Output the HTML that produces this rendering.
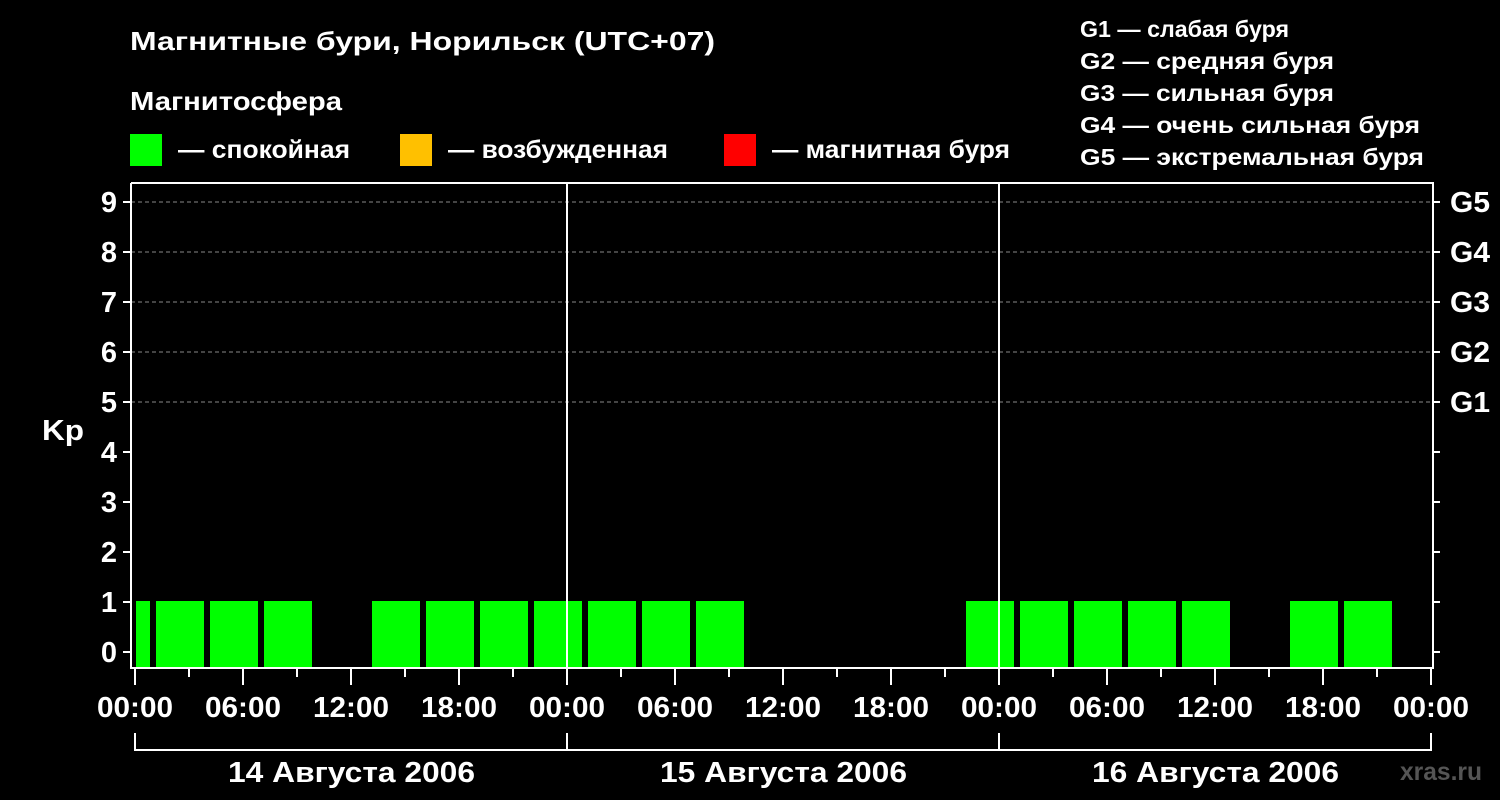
<!DOCTYPE html><html><head><meta charset="utf-8"><style>body{margin:0;background:#000}svg{display:block}text{font-family:"Liberation Sans",sans-serif;font-weight:bold;fill:#fff}</style></head><body>
<svg width="1500" height="800" viewBox="0 0 1500 800">
<rect width="1500" height="800" fill="#000"/>
<text x="130" y="50" font-size="26" textLength="585" lengthAdjust="spacingAndGlyphs">Магнитные бури, Норильск (UTC+07)</text>
<text x="130" y="110" font-size="26" textLength="212" lengthAdjust="spacingAndGlyphs">Магнитосфера</text>
<rect x="130" y="134" width="32" height="32" fill="#00ff00"/>
<text x="178" y="158" font-size="25" textLength="172" lengthAdjust="spacingAndGlyphs">— спокойная</text>
<rect x="400" y="134" width="32" height="32" fill="#ffc000"/>
<text x="448" y="158" font-size="25" textLength="220" lengthAdjust="spacingAndGlyphs">— возбужденная</text>
<rect x="724" y="134" width="32" height="32" fill="#ff0000"/>
<text x="772" y="158" font-size="25" textLength="238" lengthAdjust="spacingAndGlyphs">— магнитная буря</text>
<g font-size="23">
<text x="1080" y="37" textLength="209" lengthAdjust="spacingAndGlyphs">G1 — слабая буря</text>
<text x="1080" y="69" textLength="254" lengthAdjust="spacingAndGlyphs">G2 — средняя буря</text>
<text x="1080" y="101" textLength="254" lengthAdjust="spacingAndGlyphs">G3 — сильная буря</text>
<text x="1080" y="133" textLength="340" lengthAdjust="spacingAndGlyphs">G4 — очень сильная буря</text>
<text x="1080" y="165" textLength="344" lengthAdjust="spacingAndGlyphs">G5 — экстремальная буря</text>
</g>
<g stroke="#888" stroke-dasharray="4,3" stroke-width="1">
<line x1="131" y1="202" x2="1433" y2="202"/><line x1="131" y1="252" x2="1433" y2="252"/><line x1="131" y1="302" x2="1433" y2="302"/><line x1="131" y1="352" x2="1433" y2="352"/><line x1="131" y1="402" x2="1433" y2="402"/>
</g>
<g fill="#00ff00">
<rect x="136" y="601" width="14" height="67"/>
<rect x="156" y="601" width="48" height="67"/><rect x="210" y="601" width="48" height="67"/><rect x="264" y="601" width="48" height="67"/>
<rect x="372" y="601" width="48" height="67"/><rect x="426" y="601" width="48" height="67"/><rect x="480" y="601" width="48" height="67"/><rect x="534" y="601" width="48" height="67"/><rect x="588" y="601" width="48" height="67"/><rect x="642" y="601" width="48" height="67"/><rect x="696" y="601" width="48" height="67"/>
<rect x="966" y="601" width="48" height="67"/><rect x="1020" y="601" width="48" height="67"/><rect x="1074" y="601" width="48" height="67"/><rect x="1128" y="601" width="48" height="67"/><rect x="1182" y="601" width="48" height="67"/>
<rect x="1290" y="601" width="48" height="67"/><rect x="1344" y="601" width="48" height="67"/>
</g>
<g stroke="#fff" stroke-width="2" fill="none">
<polyline points="131,183 1433,183 1433,668 131,668 131,183"/>
<line x1="567" y1="183" x2="567" y2="668"/><line x1="999" y1="183" x2="999" y2="668"/>
<path d="M123 202h8M123 252h8M123 302h8M123 352h8M123 402h8M123 452h8M123 502h8M123 552h8M123 602h8M123 652h8"/>
<path d="M1433 202h7M1433 252h7M1433 302h7M1433 352h7M1433 402h7M1433 452h7M1433 502h7M1433 552h7M1433 602h7M1433 652h7"/>
<path d="M135 668v17M243 668v17M351 668v17M459 668v17M567 668v17M675 668v17M783 668v17M891 668v17M999 668v17M1107 668v17M1215 668v17M1323 668v17M1431 668v17"/>
<path d="M189 668v9M297 668v9M405 668v9M513 668v9M621 668v9M729 668v9M837 668v9M945 668v9M1053 668v9M1161 668v9M1269 668v9M1377 668v9"/>
<path d="M135 733v17H1431V733M567 733v17M999 733v17"/>
</g>
<g font-size="29" text-anchor="end">
<text x="117" y="212">9</text><text x="117" y="262">8</text><text x="117" y="312">7</text><text x="117" y="362">6</text><text x="117" y="412">5</text><text x="117" y="462">4</text><text x="117" y="512">3</text><text x="117" y="562">2</text><text x="117" y="612">1</text><text x="117" y="662">0</text>
</g>
<g font-size="29"><text x="1450" y="212" textLength="40" lengthAdjust="spacingAndGlyphs">G5</text><text x="1450" y="262" textLength="40" lengthAdjust="spacingAndGlyphs">G4</text><text x="1450" y="312" textLength="40" lengthAdjust="spacingAndGlyphs">G3</text><text x="1450" y="362" textLength="40" lengthAdjust="spacingAndGlyphs">G2</text><text x="1450" y="412" textLength="40" lengthAdjust="spacingAndGlyphs">G1</text></g>
<text x="42" y="440" font-size="29" textLength="42" lengthAdjust="spacingAndGlyphs">Kp</text>
<g font-size="29">
<text x="97" y="717" textLength="76" lengthAdjust="spacingAndGlyphs">00:00</text><text x="205" y="717" textLength="76" lengthAdjust="spacingAndGlyphs">06:00</text><text x="313" y="717" textLength="76" lengthAdjust="spacingAndGlyphs">12:00</text><text x="421" y="717" textLength="76" lengthAdjust="spacingAndGlyphs">18:00</text><text x="529" y="717" textLength="76" lengthAdjust="spacingAndGlyphs">00:00</text><text x="637" y="717" textLength="76" lengthAdjust="spacingAndGlyphs">06:00</text><text x="745" y="717" textLength="76" lengthAdjust="spacingAndGlyphs">12:00</text><text x="853" y="717" textLength="76" lengthAdjust="spacingAndGlyphs">18:00</text><text x="961" y="717" textLength="76" lengthAdjust="spacingAndGlyphs">00:00</text><text x="1069" y="717" textLength="76" lengthAdjust="spacingAndGlyphs">06:00</text><text x="1177" y="717" textLength="76" lengthAdjust="spacingAndGlyphs">12:00</text><text x="1285" y="717" textLength="76" lengthAdjust="spacingAndGlyphs">18:00</text><text x="1393" y="717" textLength="76" lengthAdjust="spacingAndGlyphs">00:00</text>
<text x="228" y="782" textLength="247" lengthAdjust="spacingAndGlyphs">14 Августа 2006</text><text x="660" y="782" textLength="247" lengthAdjust="spacingAndGlyphs">15 Августа 2006</text><text x="1092" y="782" textLength="247" lengthAdjust="spacingAndGlyphs">16 Августа 2006</text>
</g>
<text x="1400" y="780" font-size="25" textLength="82" lengthAdjust="spacingAndGlyphs" style="fill:#555">xras.ru</text>
</svg>
</body></html>
